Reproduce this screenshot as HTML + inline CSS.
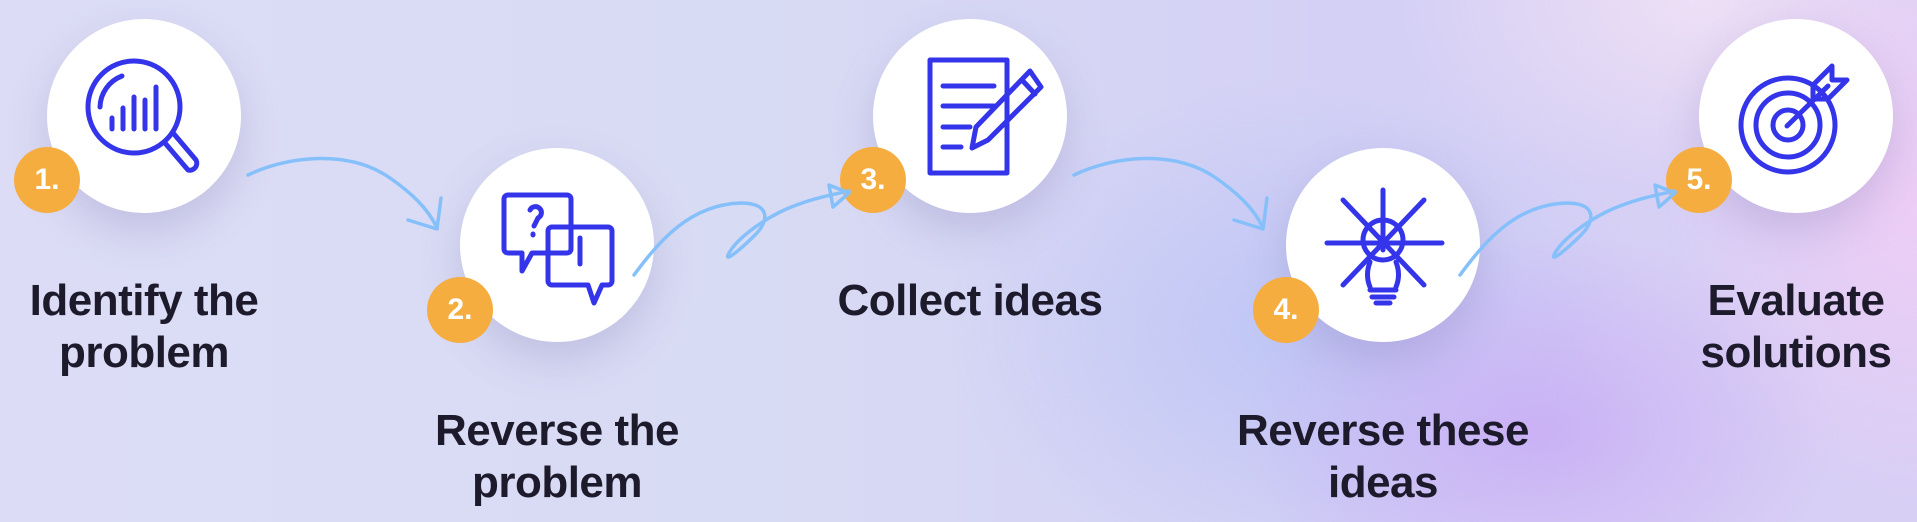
<!DOCTYPE html>
<html><head><meta charset="utf-8"><style>
html,body{margin:0;padding:0}
body{width:1917px;height:522px;overflow:hidden;position:relative;font-family:"Liberation Sans",sans-serif;
background:
radial-gradient(ellipse 300px 200px at 1540px 430px,rgba(200,170,245,.8),transparent),
radial-gradient(ellipse 350px 250px at 1300px 330px,rgba(185,195,245,.8),transparent),
radial-gradient(ellipse 250px 300px at 1917px 200px,rgba(240,205,245,.9),transparent),
radial-gradient(ellipse 300px 200px at 1700px 0px,rgba(240,225,245,.9),transparent),
linear-gradient(90deg,#dcdcf6 0%,#d8dbf4 40%,#d4d0f5 70%,#d8cff5 100%);}
.c{position:absolute;width:194px;height:194px;border-radius:50%;background:#fff;box-shadow:0 18px 40px rgba(120,110,170,.25)}
.b{position:absolute;width:66px;height:66px;border-radius:50%;background:#f5ad3f;color:#fff;font-weight:bold;font-size:30px;line-height:66px;text-align:center}
.t{position:absolute;width:360px;text-align:center;font-size:44px;font-weight:bold;color:#1d1a2c;line-height:52px;letter-spacing:-0.5px}
svg{position:absolute;left:0;top:0}
</style></head><body>
<div class="c" style="left:47px;top:19px"></div>
<div class="c" style="left:460px;top:148px"></div>
<div class="c" style="left:873px;top:19px"></div>
<div class="c" style="left:1286px;top:148px"></div>
<div class="c" style="left:1699px;top:19px"></div>
<div class="b" style="left:14px;top:147px">1.</div>
<div class="b" style="left:427px;top:277px">2.</div>
<div class="b" style="left:840px;top:147px">3.</div>
<div class="b" style="left:1253px;top:277px">4.</div>
<div class="b" style="left:1666px;top:147px">5.</div>
<div class="t" style="left:-36px;top:275px">Identify the<br>problem</div>
<div class="t" style="left:377px;top:405px">Reverse the<br>problem</div>
<div class="t" style="left:790px;top:275px">Collect ideas</div>
<div class="t" style="left:1203px;top:405px">Reverse these<br>ideas</div>
<div class="t" style="left:1616px;top:275px">Evaluate<br>solutions</div>
<svg width="1917" height="522" viewBox="0 0 1917 522" fill="none" stroke-linecap="round" stroke-linejoin="round">
<g stroke="#86c0fb" stroke-width="3.5">
<path d="M248 175 C290 155 350 150 390 178 C410 192 428 208 437 228"/>
<path d="M408 220 L437 229 L441 198"/>
<path d="M1074 175 C1116 155 1176 150 1216 178 C1236 192 1254 208 1263 228"/>
<path d="M1234 220 L1263 229 L1267 198"/>
<path d="M634 275 C660 240 690 205 740 203 C770 203 770 220 755 235 C740 250 725 262 728 255 C735 240 760 222 780 212 C805 200 830 195 849 191"/>
<path d="M829 185 L833 207 L849 193 Z"/>
<path d="M1460 275 C1486 240 1516 205 1566 203 C1596 203 1596 220 1581 235 C1566 250 1551 262 1554 255 C1561 240 1586 222 1606 212 C1631 200 1656 195 1675 191"/>
<path d="M1655 185 L1659 207 L1675 193 Z"/>
</g>
<g stroke="#3434ea" stroke-width="5">
<circle cx="134" cy="107" r="46"/>
<path d="M100 107 A34 34 0 0 1 122 76"/>
<path d="M112 118V129M123 108V129M134 97V129M145 100V129M156 87V129"/>
<path d="M165 143 L188 170 A7 7 0 0 0 196 160 L174 134"/>
<path d="M508 195 H567 A4 4 0 0 1 571 199 V249 A4 4 0 0 1 567 253 H532 L522 271 V253 H508 A4 4 0 0 1 504 249 V199 A4 4 0 0 1 508 195"/>
<path d="M552 227 H608 A4 4 0 0 1 612 231 V281 A4 4 0 0 1 608 285 H602 L594 303 L588 285 H552 A4 4 0 0 1 548 281 V231 A4 4 0 0 1 552 227"/>
<path d="M530 210 A6 6 0 1 1 538 218 L534 226 M533 234 V235"/>
<path d="M580 238 V264"/>
<path d="M930 60 H1007 V173 H930 Z"/>
<path d="M943 86H994M943 106H994M943 127H970M943 147H961"/>
<path d="M972 148 L976 127 L1030 71 L1041 87 L988 140 Z M1022 80 L1035 94"/>
<path d="M1383 190 V250 M1327 243 H1442 M1343 200 L1424 285 M1424 200 L1343 285"/>
<circle cx="1383" cy="240" r="20"/>
<path d="M1370 262 Q1365 275 1370 287 M1396 262 Q1401 275 1396 287 M1370 290H1396M1372 297H1394M1376 303H1390"/>
<circle cx="1788" cy="125" r="47"/>
<circle cx="1788" cy="125" r="32"/>
<circle cx="1788" cy="125" r="15"/>
<path d="M1787 126 L1828 86 M1813 85 L1832 66 V80 H1847 L1828 99 H1813 Z"/>
</g>
</svg>
</body></html>
